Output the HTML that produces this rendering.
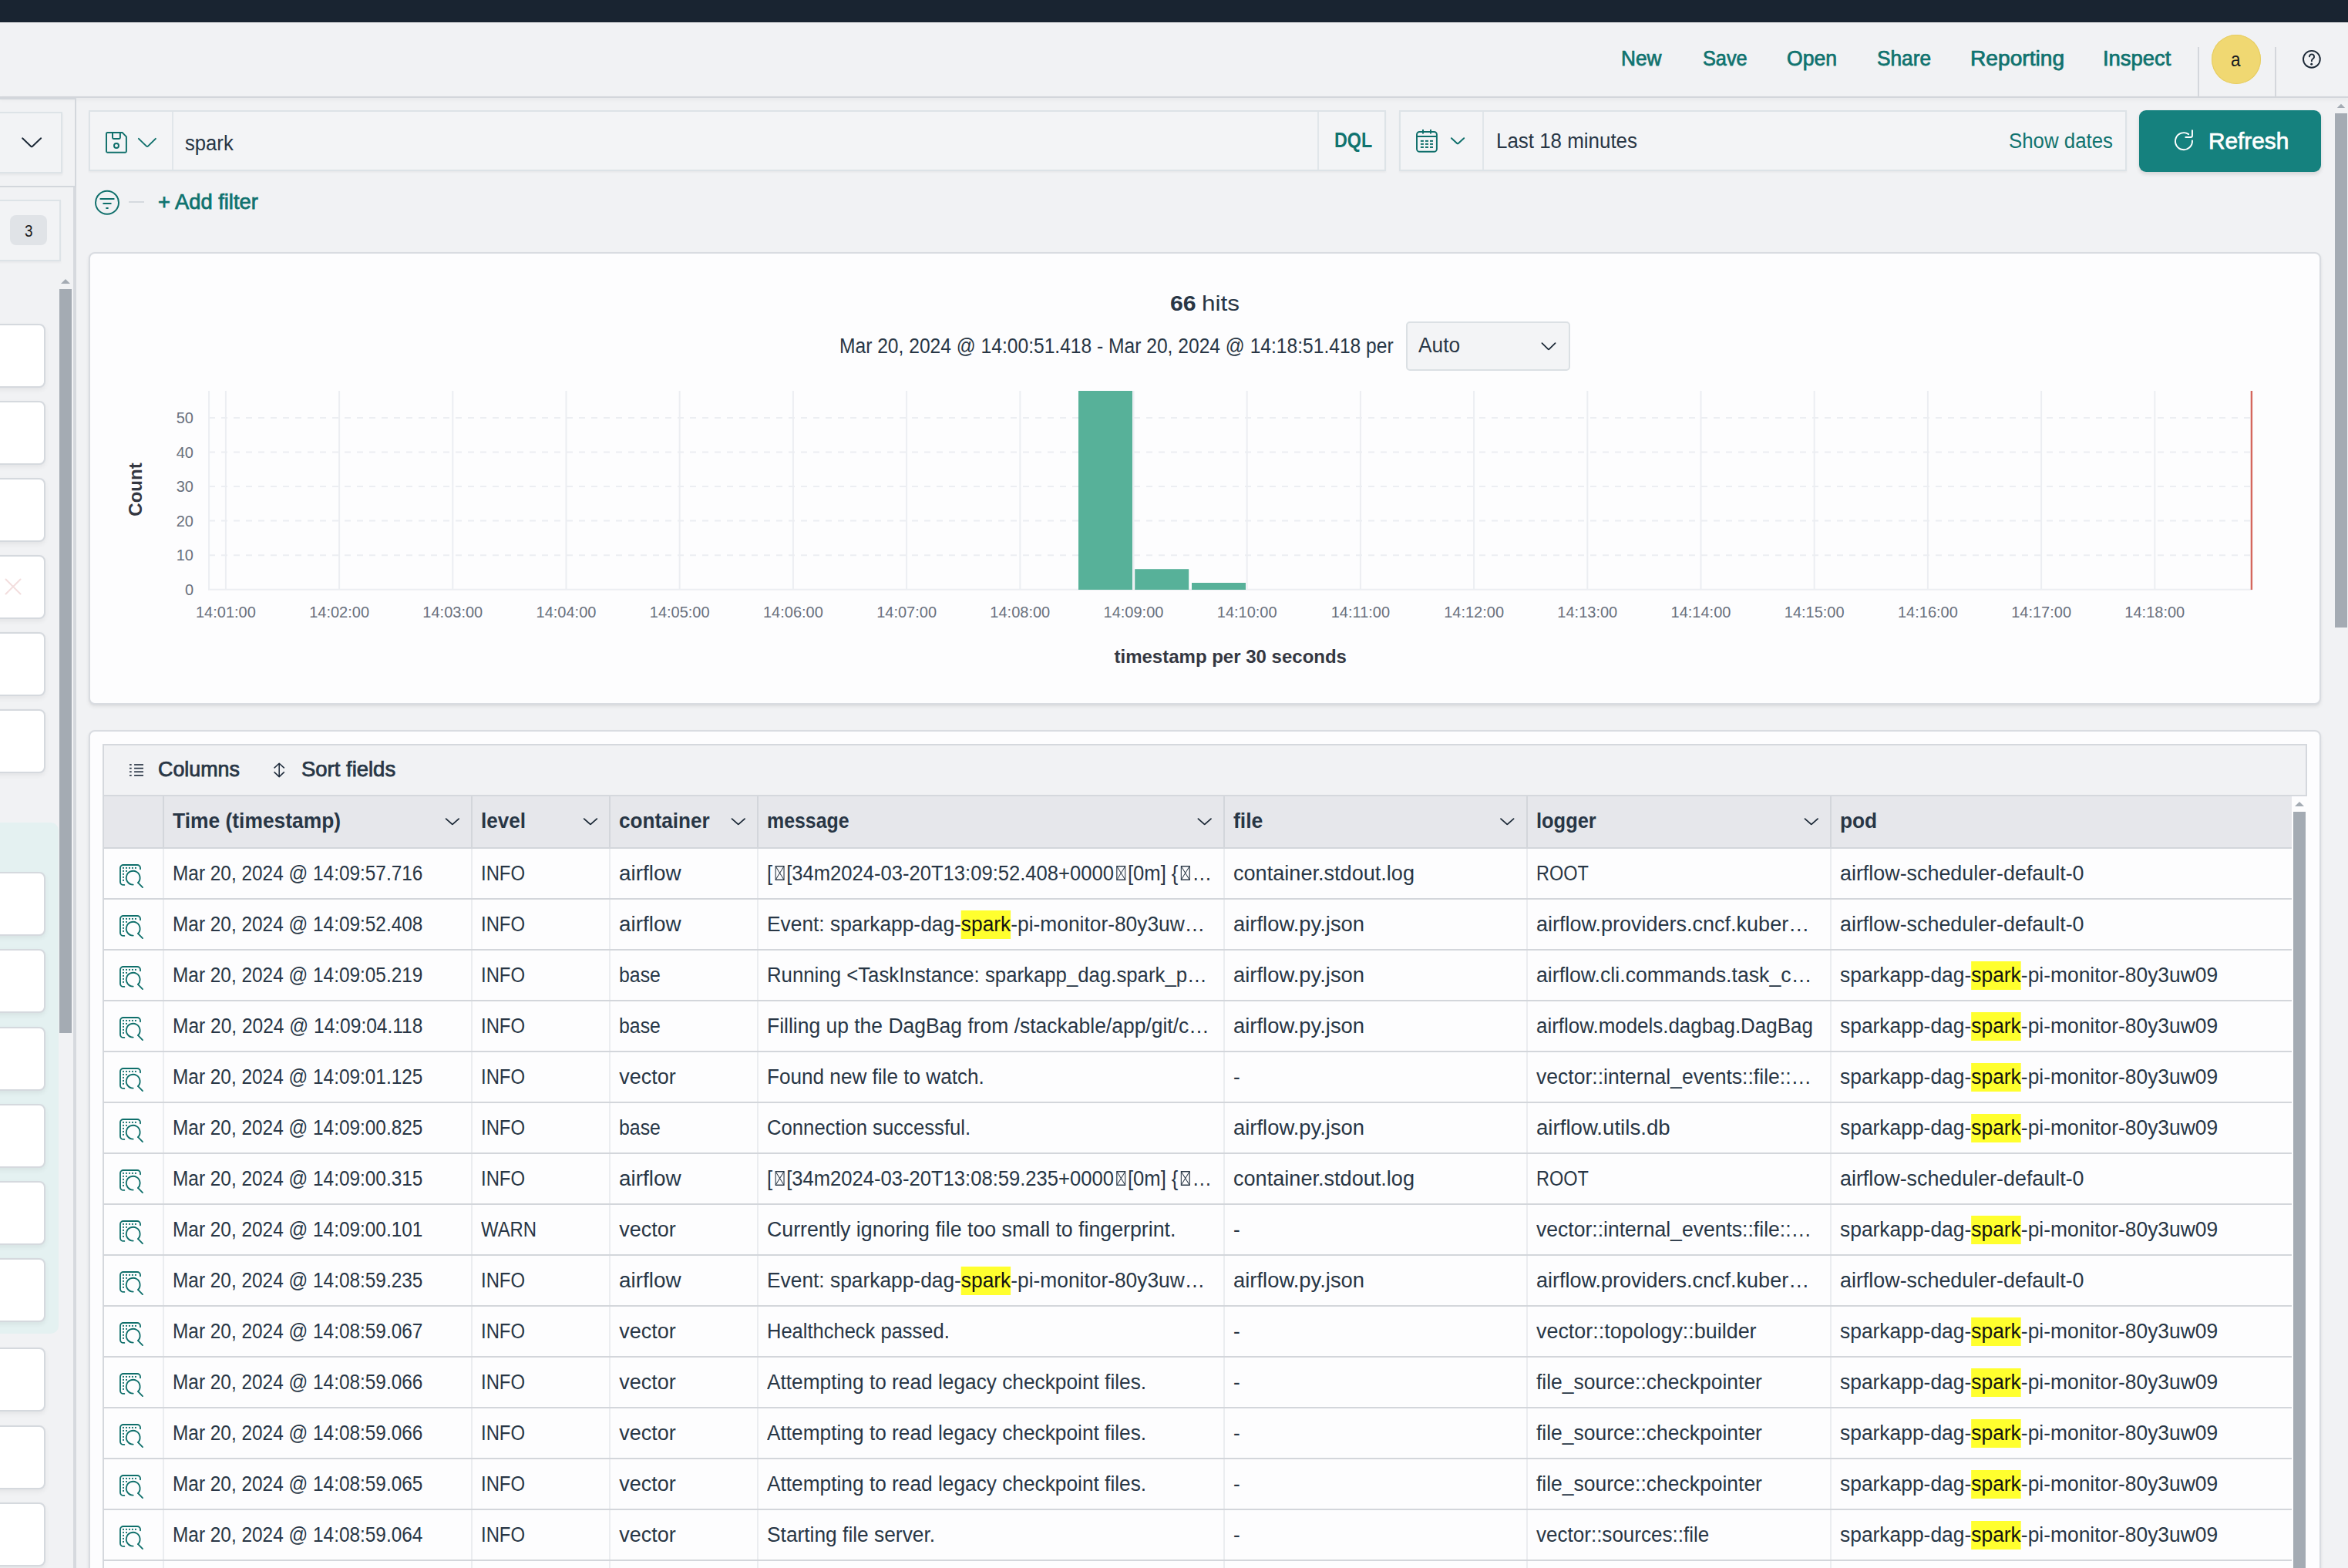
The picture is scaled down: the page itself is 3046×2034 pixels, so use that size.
<!DOCTYPE html>
<html><head><meta charset="utf-8"><title>Discover</title>
<style>div{box-sizing:border-box}html,body{margin:0;padding:0;width:3046px;height:2034px;overflow:hidden;background:#f1f2f4;font-family:'Liberation Sans', sans-serif}</style>
</head><body><div style="position:relative;width:3046px;height:2034px;overflow:hidden">
<div style="position:absolute;left:0px;top:0px;width:3046px;height:29px;background:#192431"></div>
<div style="position:absolute;left:0px;top:29px;width:3046px;height:1px;background:#ffffff"></div>
<div style="position:absolute;left:0px;top:30px;width:3046px;height:95px;background:#f1f2f4"></div>
<div style="position:absolute;left:0px;top:125px;width:3046px;height:2px;background:#d3d6db;box-shadow:0 2px 4px rgba(0,0,0,.09)"></div>
<div style="position:absolute;left:2851px;top:61px;width:2px;height:64px;background:#d4d7dc"></div>
<div style="position:absolute;left:2951px;top:61px;width:2px;height:64px;background:#d4d7dc"></div>
<div style="position:absolute;left:2869px;top:45px;width:64px;height:64px;background:#f0d872;border-radius:50%;box-shadow:inset 0 0 0 1px #e6cd63"></div>
<svg style="position:absolute;left:2975px;top:50px" width="50" height="50" viewBox="0 0 50 50"><circle cx="23.9" cy="26.8" r="10.9" fill="none" stroke="#1b2836" stroke-width="1.9"/><path d="M20.9 23.4 A3.1 3.1 0 1 1 26.3 25.6 C25.2 26.5 23.9 27 23.9 28.4 V29.2" fill="none" stroke="#1b2836" stroke-width="1.9" stroke-linecap="round"/><circle cx="23.7" cy="33.2" r="1.45" fill="#1b2836"/></svg>
<div style="position:absolute;left:3029px;top:147px;width:16px;height:667px;background:#a4abb3"></div>
<div style="position:absolute;left:-10px;top:127px;width:109px;height:116px;border:2px solid #d3d7dc;border-left:none"></div>
<div style="position:absolute;left:95px;top:243px;width:4px;height:1791px;background:#d6d9de"></div>
<div style="position:absolute;left:-10px;top:145px;width:91px;height:80px;border:2px solid #dde3e7;background:#f2f3f5;box-shadow:0 2px 3px rgba(0,0,0,.05)"></div>
<div style="position:absolute;left:-10px;top:259px;width:89px;height:80px;border:2px solid #dde3e7;background:#f2f3f5;box-shadow:0 2px 3px rgba(0,0,0,.04)"></div>
<div style="position:absolute;left:13px;top:279px;width:48px;height:39px;background:#e0e3e7;border-radius:8px"></div>
<div style="position:absolute;left:77px;top:375px;width:16px;height:965px;background:#a4abb3"></div>
<svg style="position:absolute;left:79px;top:361px" width="12" height="8"><path d="M0 7 L6 1 L12 7 Z" fill="#a4abb3"/></svg>
<div style="position:absolute;left:-10px;top:1067px;width:86px;height:663px;background:#e4f1f1;border-radius:0 10px 10px 0"></div>
<div style="position:absolute;left:-10px;top:420px;width:69px;height:83px;background:#fff;border:2px solid #d5d9de;border-radius:0 8px 8px 0;box-shadow:0 3px 6px rgba(0,0,0,.06);box-sizing:border-box"></div>
<div style="position:absolute;left:-10px;top:520px;width:69px;height:83px;background:#fff;border:2px solid #d5d9de;border-radius:0 8px 8px 0;box-shadow:0 3px 6px rgba(0,0,0,.06);box-sizing:border-box"></div>
<div style="position:absolute;left:-10px;top:620px;width:69px;height:83px;background:#fff;border:2px solid #d5d9de;border-radius:0 8px 8px 0;box-shadow:0 3px 6px rgba(0,0,0,.06);box-sizing:border-box"></div>
<div style="position:absolute;left:-10px;top:720px;width:69px;height:83px;background:#fff;border:2px solid #d5d9de;border-radius:0 8px 8px 0;box-shadow:0 3px 6px rgba(0,0,0,.06);box-sizing:border-box"></div>
<div style="position:absolute;left:-10px;top:820px;width:69px;height:83px;background:#fff;border:2px solid #d5d9de;border-radius:0 8px 8px 0;box-shadow:0 3px 6px rgba(0,0,0,.06);box-sizing:border-box"></div>
<div style="position:absolute;left:-10px;top:920px;width:69px;height:83px;background:#fff;border:2px solid #d5d9de;border-radius:0 8px 8px 0;box-shadow:0 3px 6px rgba(0,0,0,.06);box-sizing:border-box"></div>
<div style="position:absolute;left:-10px;top:1131px;width:69px;height:83px;background:#fff;border:2px solid #d5d9de;border-radius:0 8px 8px 0;box-shadow:0 3px 6px rgba(0,0,0,.06);box-sizing:border-box"></div>
<div style="position:absolute;left:-10px;top:1231px;width:69px;height:83px;background:#fff;border:2px solid #d5d9de;border-radius:0 8px 8px 0;box-shadow:0 3px 6px rgba(0,0,0,.06);box-sizing:border-box"></div>
<div style="position:absolute;left:-10px;top:1332px;width:69px;height:83px;background:#fff;border:2px solid #d5d9de;border-radius:0 8px 8px 0;box-shadow:0 3px 6px rgba(0,0,0,.06);box-sizing:border-box"></div>
<div style="position:absolute;left:-10px;top:1432px;width:69px;height:83px;background:#fff;border:2px solid #d5d9de;border-radius:0 8px 8px 0;box-shadow:0 3px 6px rgba(0,0,0,.06);box-sizing:border-box"></div>
<div style="position:absolute;left:-10px;top:1532px;width:69px;height:83px;background:#fff;border:2px solid #d5d9de;border-radius:0 8px 8px 0;box-shadow:0 3px 6px rgba(0,0,0,.06);box-sizing:border-box"></div>
<div style="position:absolute;left:-10px;top:1632px;width:69px;height:83px;background:#fff;border:2px solid #d5d9de;border-radius:0 8px 8px 0;box-shadow:0 3px 6px rgba(0,0,0,.06);box-sizing:border-box"></div>
<div style="position:absolute;left:-10px;top:1748px;width:69px;height:83px;background:#fff;border:2px solid #d5d9de;border-radius:0 8px 8px 0;box-shadow:0 3px 6px rgba(0,0,0,.06);box-sizing:border-box"></div>
<div style="position:absolute;left:-10px;top:1849px;width:69px;height:83px;background:#fff;border:2px solid #d5d9de;border-radius:0 8px 8px 0;box-shadow:0 3px 6px rgba(0,0,0,.06);box-sizing:border-box"></div>
<div style="position:absolute;left:-10px;top:1949px;width:69px;height:83px;background:#fff;border:2px solid #d5d9de;border-radius:0 8px 8px 0;box-shadow:0 3px 6px rgba(0,0,0,.06);box-sizing:border-box"></div>
<svg style="position:absolute;left:6px;top:750px" width="22" height="22"><path d="M1.5 1.5 L20.5 20.5 M20.5 1.5 L1.5 20.5" stroke="#f3dede" stroke-width="2" stroke-linecap="round"/></svg>
<div style="position:absolute;left:115px;top:143px;width:1683px;height:79px;background:#f3f4f6;border:2px solid #dde3e7;box-sizing:border-box;box-shadow:0 2px 2px rgba(0,0,0,.04)"></div>
<div style="position:absolute;left:223px;top:145px;width:2px;height:75px;background:#e1e6ea"></div>
<div style="position:absolute;left:1709px;top:145px;width:2px;height:75px;background:#e1e6ea"></div>
<div style="position:absolute;left:1815px;top:143px;width:944px;height:79px;background:#f3f4f6;border:2px solid #dde3e7;box-sizing:border-box;box-shadow:0 2px 2px rgba(0,0,0,.04)"></div>
<div style="position:absolute;left:1923px;top:145px;width:2px;height:75px;background:#e1e6ea"></div>
<div style="position:absolute;left:2775px;top:143px;width:236px;height:80px;background:#15817e;border-radius:9px;box-shadow:0 3px 5px rgba(0,0,0,.12)"></div>
<div style="position:absolute;left:167px;top:261px;width:20px;height:2px;background:#d5d9de"></div>
<div style="position:absolute;left:115px;top:327px;width:2896px;height:587px;background:#fdfdfe;border:2px solid #d9dce1;border-radius:8px;box-sizing:border-box;box-shadow:0 3px 5px rgba(0,0,0,.07),0 1px 2px rgba(0,0,0,.04)"></div>
<div style="position:absolute;left:1824px;top:417px;width:213px;height:64px;background:#f3f4f6;border:2px solid #dbe0e4;border-radius:5px;box-sizing:border-box"></div>
<svg style="position:absolute;left:0;top:0" width="3046" height="2034"><line x1="271" y1="720.2" x2="2921" y2="720.2" stroke="#eceef2" stroke-width="2" stroke-dasharray="8 8"/><line x1="271" y1="675.6" x2="2921" y2="675.6" stroke="#eceef2" stroke-width="2" stroke-dasharray="8 8"/><line x1="271" y1="631.1" x2="2921" y2="631.1" stroke="#eceef2" stroke-width="2" stroke-dasharray="8 8"/><line x1="271" y1="586.5" x2="2921" y2="586.5" stroke="#eceef2" stroke-width="2" stroke-dasharray="8 8"/><line x1="271" y1="541.9" x2="2921" y2="541.9" stroke="#eceef2" stroke-width="2" stroke-dasharray="8 8"/><line x1="292.9" y1="507" x2="292.9" y2="765" stroke="#eceef2" stroke-width="2"/><line x1="440.1" y1="507" x2="440.1" y2="765" stroke="#eceef2" stroke-width="2"/><line x1="587.3" y1="507" x2="587.3" y2="765" stroke="#eceef2" stroke-width="2"/><line x1="734.5" y1="507" x2="734.5" y2="765" stroke="#eceef2" stroke-width="2"/><line x1="881.7" y1="507" x2="881.7" y2="765" stroke="#eceef2" stroke-width="2"/><line x1="1028.9" y1="507" x2="1028.9" y2="765" stroke="#eceef2" stroke-width="2"/><line x1="1176.1" y1="507" x2="1176.1" y2="765" stroke="#eceef2" stroke-width="2"/><line x1="1323.3" y1="507" x2="1323.3" y2="765" stroke="#eceef2" stroke-width="2"/><line x1="1470.5" y1="507" x2="1470.5" y2="765" stroke="#eceef2" stroke-width="2"/><line x1="1617.7" y1="507" x2="1617.7" y2="765" stroke="#eceef2" stroke-width="2"/><line x1="1764.9" y1="507" x2="1764.9" y2="765" stroke="#eceef2" stroke-width="2"/><line x1="1912.1" y1="507" x2="1912.1" y2="765" stroke="#eceef2" stroke-width="2"/><line x1="2059.3" y1="507" x2="2059.3" y2="765" stroke="#eceef2" stroke-width="2"/><line x1="2206.5" y1="507" x2="2206.5" y2="765" stroke="#eceef2" stroke-width="2"/><line x1="2353.7" y1="507" x2="2353.7" y2="765" stroke="#eceef2" stroke-width="2"/><line x1="2500.9" y1="507" x2="2500.9" y2="765" stroke="#eceef2" stroke-width="2"/><line x1="2648.1" y1="507" x2="2648.1" y2="765" stroke="#eceef2" stroke-width="2"/><line x1="2795.3" y1="507" x2="2795.3" y2="765" stroke="#eceef2" stroke-width="2"/><line x1="271.1" y1="507" x2="271.1" y2="765" stroke="#eceef2" stroke-width="2"/><line x1="270" y1="764.8" x2="2922" y2="764.8" stroke="#eceef2" stroke-width="2"/><rect x="1399" y="507" width="70" height="258" fill="#57b199"/><rect x="1472.2" y="738.2" width="70" height="26.8" fill="#57b199"/><rect x="1546" y="756" width="70" height="9" fill="#57b199"/><rect x="2919.7" y="507" width="2.4" height="258" fill="#d4675d"/></svg>
<div style="position:absolute;left:176px;top:635px;width:0;height:0"><div style="position:absolute;left:-50px;top:-14px;width:100px;height:28px;transform:rotate(-90deg);text-align:center;font:700 24px/28px 'Liberation Sans', sans-serif;color:#343741">Count</div></div>
<div style="position:absolute;left:115px;top:947px;width:2896px;height:1107px;background:#fdfdfe;border:2px solid #d9dce1;border-radius:8px;box-sizing:border-box;box-shadow:0 3px 5px rgba(0,0,0,.07),0 1px 2px rgba(0,0,0,.04)"></div>
<div style="position:absolute;left:133px;top:965px;width:2860px;height:68px;background:#f1f2f4;border:2px solid #d5d8dd;border-bottom:none;box-sizing:border-box"></div>
<div style="position:absolute;left:133px;top:1031px;width:2860px;height:2px;background:#d5d8dd"></div>
<div style="position:absolute;left:133px;top:1033px;width:2840px;height:67px;background:#e6e7eb"></div>
<div style="position:absolute;left:133px;top:1099px;width:2840px;height:2px;background:#d3d6db"></div>
<div style="position:absolute;left:133px;top:1033px;width:2px;height:1001px;background:#d5d8dd"></div>
<div style="position:absolute;left:211px;top:1033px;width:2px;height:67px;background:#d3d6db"></div>
<div style="position:absolute;left:211px;top:1101px;width:2px;height:933px;background:#ebedf0"></div>
<div style="position:absolute;left:611px;top:1033px;width:2px;height:67px;background:#d3d6db"></div>
<div style="position:absolute;left:611px;top:1101px;width:2px;height:933px;background:#ebedf0"></div>
<div style="position:absolute;left:790px;top:1033px;width:2px;height:67px;background:#d3d6db"></div>
<div style="position:absolute;left:790px;top:1101px;width:2px;height:933px;background:#ebedf0"></div>
<div style="position:absolute;left:982px;top:1033px;width:2px;height:67px;background:#d3d6db"></div>
<div style="position:absolute;left:982px;top:1101px;width:2px;height:933px;background:#ebedf0"></div>
<div style="position:absolute;left:1587px;top:1033px;width:2px;height:67px;background:#d3d6db"></div>
<div style="position:absolute;left:1587px;top:1101px;width:2px;height:933px;background:#ebedf0"></div>
<div style="position:absolute;left:1980px;top:1033px;width:2px;height:67px;background:#d3d6db"></div>
<div style="position:absolute;left:1980px;top:1101px;width:2px;height:933px;background:#ebedf0"></div>
<div style="position:absolute;left:2374px;top:1033px;width:2px;height:67px;background:#d3d6db"></div>
<div style="position:absolute;left:2374px;top:1101px;width:2px;height:933px;background:#ebedf0"></div>
<div style="position:absolute;left:2975px;top:1053px;width:16px;height:981px;background:#a4abb3"></div>
<svg style="position:absolute;left:2977px;top:1039px" width="12" height="8"><path d="M0 7 L6 1 L12 7 Z" fill="#a4abb3"/></svg>
<div style="position:absolute;left:133px;top:1165px;width:2840px;height:2px;background:#d3d6db"></div>
<div style="position:absolute;left:133px;top:1231px;width:2840px;height:2px;background:#d3d6db"></div>
<div style="position:absolute;left:133px;top:1297px;width:2840px;height:2px;background:#d3d6db"></div>
<div style="position:absolute;left:133px;top:1363px;width:2840px;height:2px;background:#d3d6db"></div>
<div style="position:absolute;left:133px;top:1429px;width:2840px;height:2px;background:#d3d6db"></div>
<div style="position:absolute;left:133px;top:1495px;width:2840px;height:2px;background:#d3d6db"></div>
<div style="position:absolute;left:133px;top:1561px;width:2840px;height:2px;background:#d3d6db"></div>
<div style="position:absolute;left:133px;top:1627px;width:2840px;height:2px;background:#d3d6db"></div>
<div style="position:absolute;left:133px;top:1693px;width:2840px;height:2px;background:#d3d6db"></div>
<div style="position:absolute;left:133px;top:1759px;width:2840px;height:2px;background:#d3d6db"></div>
<div style="position:absolute;left:133px;top:1825px;width:2840px;height:2px;background:#d3d6db"></div>
<div style="position:absolute;left:133px;top:1891px;width:2840px;height:2px;background:#d3d6db"></div>
<div style="position:absolute;left:133px;top:1957px;width:2840px;height:2px;background:#d3d6db"></div>
<div style="position:absolute;left:133px;top:2023px;width:2840px;height:2px;background:#d3d6db"></div>
<div style="position:absolute;left:133px;top:2089px;width:2840px;height:2px;background:#d3d6db"></div>
<svg style="position:absolute;left:0;top:0" width="3046" height="2034"><path d="M3031.8 140 L3037 134.8 L3042.2 140 Z" fill="#a4abb3"/>
<path d="M29.1 179.3 L40.3 190 Q41.1 190.7 41.9 190 L53.2 179.3" fill="none" stroke="#1b2836" stroke-width="1.95" stroke-linecap="round" stroke-linejoin="round"/>
<path d="M139.5 171.9 H158.6 L163.9 177.4 V196.3 Q163.9 197.8 162.4 197.8 H139.5 Q138 197.8 138 196.3 V173.4 Q138 171.9 139.5 171.9 Z" fill="none" stroke="#0f6f6b" stroke-width="1.95" stroke-linejoin="round"/>
<path d="M146 172 V178.6 Q146 179.9 147.3 179.9 H154.6 Q155.9 179.9 155.9 178.6 V172" fill="none" stroke="#0f6f6b" stroke-width="1.95"/>
<circle cx="151" cy="189" r="3" fill="none" stroke="#0f6f6b" stroke-width="1.95"/>
<path d="M179.9 179.9 L190 189.6 Q191 190.5 192 189.6 L201.9 179.9" fill="none" stroke="#0f6f6b" stroke-width="1.95" stroke-linecap="round" stroke-linejoin="round"/>
<rect x="1838" y="170.9" width="25.9" height="25.9" rx="3.6" fill="none" stroke="#0f6f6b" stroke-width="1.95"/>
<path d="M1838 176.9 H1863.9 M1846 168 V173.6 M1856 168 V173.6" fill="none" stroke="#0f6f6b" stroke-width="1.95"/>
<rect x="1842.9" y="181.9" width="4" height="1.95" fill="#0f6f6b"/>
<rect x="1842.9" y="185.9" width="4" height="1.95" fill="#0f6f6b"/>
<rect x="1842.9" y="190.0" width="4" height="1.95" fill="#0f6f6b"/>
<rect x="1849.0" y="181.9" width="4" height="1.95" fill="#0f6f6b"/>
<rect x="1849.0" y="185.9" width="4" height="1.95" fill="#0f6f6b"/>
<rect x="1849.0" y="190.0" width="4" height="1.95" fill="#0f6f6b"/>
<rect x="1855.0" y="181.9" width="4" height="1.95" fill="#0f6f6b"/>
<rect x="1855.0" y="185.9" width="4" height="1.95" fill="#0f6f6b"/>
<rect x="1855.0" y="190.0" width="4" height="1.95" fill="#0f6f6b"/>
<path d="M1882.9 179.2 L1890.2 186 Q1891 186.7 1891.8 186 L1899.2 179.2" fill="none" stroke="#0f6f6b" stroke-width="1.95" stroke-linecap="round" stroke-linejoin="round"/>
<g transform="translate(2810 155)" fill="none" stroke="#fff" stroke-width="1.95" stroke-linecap="round"><path d="M33.96 27.4 A11 11 0 1 1 29.2 19.1"/><path d="M33.96 14.1 V21 Q33.96 22.96 32 22.96 H25.3"/></g>
<circle cx="139" cy="262.8" r="15" fill="none" stroke="#0f6f6b" stroke-width="1.95"/>
<path d="M130.3 257.9 H147.7 M134.2 263.9 H143.8 M138.1 270 H139.9" fill="none" stroke="#0f6f6b" stroke-width="1.95" stroke-linecap="round"/>
<path d="M2000.4 445.2 L2008.3 452.9 Q2009 453.6 2009.7 452.9 L2017.6 445.2" fill="none" stroke="#1b2836" stroke-width="1.75" stroke-linecap="round" stroke-linejoin="round"/>
<rect x="168" y="991.2" width="2.7" height="1.6" fill="#1d2a3a"/><rect x="174.1" y="991.2" width="11.9" height="1.6" fill="#1d2a3a"/>
<rect x="168" y="995.8" width="2.7" height="1.6" fill="#1d2a3a"/><rect x="174.1" y="995.8" width="11.9" height="1.6" fill="#1d2a3a"/>
<rect x="168" y="1000.4" width="2.7" height="1.6" fill="#1d2a3a"/><rect x="174.1" y="1000.4" width="11.9" height="1.6" fill="#1d2a3a"/>
<rect x="168" y="1005.0" width="2.7" height="1.6" fill="#1d2a3a"/><rect x="174.1" y="1005.0" width="11.9" height="1.6" fill="#1d2a3a"/>
<path d="M355.6 996.4 L362.2 990.2 L368.8 996.4 M355.6 1001.4 L362.2 1007.6 L368.8 1001.4 M362.2 990.4 V1007.4" fill="none" stroke="#1d2a3a" stroke-width="1.5" stroke-linejoin="round"/>
<path d="M578.6 1062.2 L586.2 1068.9 Q586.9 1069.6 587.6 1068.9 L595.2 1062.2" fill="none" stroke="#1b2836" stroke-width="1.75" stroke-linecap="round" stroke-linejoin="round"/>
<path d="M757.7 1062.2 L765.3 1068.9 Q766.0 1069.6 766.7 1068.9 L774.3 1062.2" fill="none" stroke="#1b2836" stroke-width="1.75" stroke-linecap="round" stroke-linejoin="round"/>
<path d="M949.5 1062.2 L957.1 1068.9 Q957.8 1069.6 958.5 1068.9 L966.1 1062.2" fill="none" stroke="#1b2836" stroke-width="1.75" stroke-linecap="round" stroke-linejoin="round"/>
<path d="M1554.4 1062.2 L1562.0 1068.9 Q1562.7 1069.6 1563.4 1068.9 L1571.0 1062.2" fill="none" stroke="#1b2836" stroke-width="1.75" stroke-linecap="round" stroke-linejoin="round"/>
<path d="M1947.0 1062.2 L1954.6 1068.9 Q1955.3 1069.6 1956.0 1068.9 L1963.6 1062.2" fill="none" stroke="#1b2836" stroke-width="1.75" stroke-linecap="round" stroke-linejoin="round"/>
<path d="M2341.5 1062.2 L2349.1 1068.9 Q2349.8 1069.6 2350.5 1068.9 L2358.1 1062.2" fill="none" stroke="#1b2836" stroke-width="1.75" stroke-linecap="round" stroke-linejoin="round"/>
<g transform="translate(145 1110)"><g fill="none" stroke="#0f6f6b" stroke-width="1.85" stroke-linecap="round"><path d="M16.3 37.9 H15 A4 4 0 0 1 11 33.9 V16 A4 4 0 0 1 15 12 H33 A4 4 0 0 1 37 16 V17.2"/><path d="M34.0 35.0 A8.9 8.9 0 1 0 27.7 37.6"/><path d="M34.4 35.4 L40 41.1"/></g><g fill="#0f6f6b"><rect x="14.05" y="14.95" width="1.9" height="1.9"/><rect x="18.05" y="14.95" width="1.9" height="1.9"/><rect x="22.05" y="14.95" width="1.9" height="1.9"/><rect x="25.95" y="14.95" width="1.9" height="1.9"/><rect x="29.95" y="14.95" width="1.9" height="1.9"/><rect x="14.05" y="18.95" width="1.9" height="1.9"/><rect x="18.05" y="18.95" width="1.9" height="1.9"/><rect x="14.05" y="22.95" width="1.9" height="1.9"/><rect x="14.05" y="26.95" width="1.9" height="1.9"/><rect x="14.05" y="30.95" width="1.9" height="1.9"/></g></g>
<g transform="translate(145 1176)"><g fill="none" stroke="#0f6f6b" stroke-width="1.85" stroke-linecap="round"><path d="M16.3 37.9 H15 A4 4 0 0 1 11 33.9 V16 A4 4 0 0 1 15 12 H33 A4 4 0 0 1 37 16 V17.2"/><path d="M34.0 35.0 A8.9 8.9 0 1 0 27.7 37.6"/><path d="M34.4 35.4 L40 41.1"/></g><g fill="#0f6f6b"><rect x="14.05" y="14.95" width="1.9" height="1.9"/><rect x="18.05" y="14.95" width="1.9" height="1.9"/><rect x="22.05" y="14.95" width="1.9" height="1.9"/><rect x="25.95" y="14.95" width="1.9" height="1.9"/><rect x="29.95" y="14.95" width="1.9" height="1.9"/><rect x="14.05" y="18.95" width="1.9" height="1.9"/><rect x="18.05" y="18.95" width="1.9" height="1.9"/><rect x="14.05" y="22.95" width="1.9" height="1.9"/><rect x="14.05" y="26.95" width="1.9" height="1.9"/><rect x="14.05" y="30.95" width="1.9" height="1.9"/></g></g>
<g transform="translate(145 1242)"><g fill="none" stroke="#0f6f6b" stroke-width="1.85" stroke-linecap="round"><path d="M16.3 37.9 H15 A4 4 0 0 1 11 33.9 V16 A4 4 0 0 1 15 12 H33 A4 4 0 0 1 37 16 V17.2"/><path d="M34.0 35.0 A8.9 8.9 0 1 0 27.7 37.6"/><path d="M34.4 35.4 L40 41.1"/></g><g fill="#0f6f6b"><rect x="14.05" y="14.95" width="1.9" height="1.9"/><rect x="18.05" y="14.95" width="1.9" height="1.9"/><rect x="22.05" y="14.95" width="1.9" height="1.9"/><rect x="25.95" y="14.95" width="1.9" height="1.9"/><rect x="29.95" y="14.95" width="1.9" height="1.9"/><rect x="14.05" y="18.95" width="1.9" height="1.9"/><rect x="18.05" y="18.95" width="1.9" height="1.9"/><rect x="14.05" y="22.95" width="1.9" height="1.9"/><rect x="14.05" y="26.95" width="1.9" height="1.9"/><rect x="14.05" y="30.95" width="1.9" height="1.9"/></g></g>
<g transform="translate(145 1308)"><g fill="none" stroke="#0f6f6b" stroke-width="1.85" stroke-linecap="round"><path d="M16.3 37.9 H15 A4 4 0 0 1 11 33.9 V16 A4 4 0 0 1 15 12 H33 A4 4 0 0 1 37 16 V17.2"/><path d="M34.0 35.0 A8.9 8.9 0 1 0 27.7 37.6"/><path d="M34.4 35.4 L40 41.1"/></g><g fill="#0f6f6b"><rect x="14.05" y="14.95" width="1.9" height="1.9"/><rect x="18.05" y="14.95" width="1.9" height="1.9"/><rect x="22.05" y="14.95" width="1.9" height="1.9"/><rect x="25.95" y="14.95" width="1.9" height="1.9"/><rect x="29.95" y="14.95" width="1.9" height="1.9"/><rect x="14.05" y="18.95" width="1.9" height="1.9"/><rect x="18.05" y="18.95" width="1.9" height="1.9"/><rect x="14.05" y="22.95" width="1.9" height="1.9"/><rect x="14.05" y="26.95" width="1.9" height="1.9"/><rect x="14.05" y="30.95" width="1.9" height="1.9"/></g></g>
<g transform="translate(145 1374)"><g fill="none" stroke="#0f6f6b" stroke-width="1.85" stroke-linecap="round"><path d="M16.3 37.9 H15 A4 4 0 0 1 11 33.9 V16 A4 4 0 0 1 15 12 H33 A4 4 0 0 1 37 16 V17.2"/><path d="M34.0 35.0 A8.9 8.9 0 1 0 27.7 37.6"/><path d="M34.4 35.4 L40 41.1"/></g><g fill="#0f6f6b"><rect x="14.05" y="14.95" width="1.9" height="1.9"/><rect x="18.05" y="14.95" width="1.9" height="1.9"/><rect x="22.05" y="14.95" width="1.9" height="1.9"/><rect x="25.95" y="14.95" width="1.9" height="1.9"/><rect x="29.95" y="14.95" width="1.9" height="1.9"/><rect x="14.05" y="18.95" width="1.9" height="1.9"/><rect x="18.05" y="18.95" width="1.9" height="1.9"/><rect x="14.05" y="22.95" width="1.9" height="1.9"/><rect x="14.05" y="26.95" width="1.9" height="1.9"/><rect x="14.05" y="30.95" width="1.9" height="1.9"/></g></g>
<g transform="translate(145 1440)"><g fill="none" stroke="#0f6f6b" stroke-width="1.85" stroke-linecap="round"><path d="M16.3 37.9 H15 A4 4 0 0 1 11 33.9 V16 A4 4 0 0 1 15 12 H33 A4 4 0 0 1 37 16 V17.2"/><path d="M34.0 35.0 A8.9 8.9 0 1 0 27.7 37.6"/><path d="M34.4 35.4 L40 41.1"/></g><g fill="#0f6f6b"><rect x="14.05" y="14.95" width="1.9" height="1.9"/><rect x="18.05" y="14.95" width="1.9" height="1.9"/><rect x="22.05" y="14.95" width="1.9" height="1.9"/><rect x="25.95" y="14.95" width="1.9" height="1.9"/><rect x="29.95" y="14.95" width="1.9" height="1.9"/><rect x="14.05" y="18.95" width="1.9" height="1.9"/><rect x="18.05" y="18.95" width="1.9" height="1.9"/><rect x="14.05" y="22.95" width="1.9" height="1.9"/><rect x="14.05" y="26.95" width="1.9" height="1.9"/><rect x="14.05" y="30.95" width="1.9" height="1.9"/></g></g>
<g transform="translate(145 1506)"><g fill="none" stroke="#0f6f6b" stroke-width="1.85" stroke-linecap="round"><path d="M16.3 37.9 H15 A4 4 0 0 1 11 33.9 V16 A4 4 0 0 1 15 12 H33 A4 4 0 0 1 37 16 V17.2"/><path d="M34.0 35.0 A8.9 8.9 0 1 0 27.7 37.6"/><path d="M34.4 35.4 L40 41.1"/></g><g fill="#0f6f6b"><rect x="14.05" y="14.95" width="1.9" height="1.9"/><rect x="18.05" y="14.95" width="1.9" height="1.9"/><rect x="22.05" y="14.95" width="1.9" height="1.9"/><rect x="25.95" y="14.95" width="1.9" height="1.9"/><rect x="29.95" y="14.95" width="1.9" height="1.9"/><rect x="14.05" y="18.95" width="1.9" height="1.9"/><rect x="18.05" y="18.95" width="1.9" height="1.9"/><rect x="14.05" y="22.95" width="1.9" height="1.9"/><rect x="14.05" y="26.95" width="1.9" height="1.9"/><rect x="14.05" y="30.95" width="1.9" height="1.9"/></g></g>
<g transform="translate(145 1572)"><g fill="none" stroke="#0f6f6b" stroke-width="1.85" stroke-linecap="round"><path d="M16.3 37.9 H15 A4 4 0 0 1 11 33.9 V16 A4 4 0 0 1 15 12 H33 A4 4 0 0 1 37 16 V17.2"/><path d="M34.0 35.0 A8.9 8.9 0 1 0 27.7 37.6"/><path d="M34.4 35.4 L40 41.1"/></g><g fill="#0f6f6b"><rect x="14.05" y="14.95" width="1.9" height="1.9"/><rect x="18.05" y="14.95" width="1.9" height="1.9"/><rect x="22.05" y="14.95" width="1.9" height="1.9"/><rect x="25.95" y="14.95" width="1.9" height="1.9"/><rect x="29.95" y="14.95" width="1.9" height="1.9"/><rect x="14.05" y="18.95" width="1.9" height="1.9"/><rect x="18.05" y="18.95" width="1.9" height="1.9"/><rect x="14.05" y="22.95" width="1.9" height="1.9"/><rect x="14.05" y="26.95" width="1.9" height="1.9"/><rect x="14.05" y="30.95" width="1.9" height="1.9"/></g></g>
<g transform="translate(145 1638)"><g fill="none" stroke="#0f6f6b" stroke-width="1.85" stroke-linecap="round"><path d="M16.3 37.9 H15 A4 4 0 0 1 11 33.9 V16 A4 4 0 0 1 15 12 H33 A4 4 0 0 1 37 16 V17.2"/><path d="M34.0 35.0 A8.9 8.9 0 1 0 27.7 37.6"/><path d="M34.4 35.4 L40 41.1"/></g><g fill="#0f6f6b"><rect x="14.05" y="14.95" width="1.9" height="1.9"/><rect x="18.05" y="14.95" width="1.9" height="1.9"/><rect x="22.05" y="14.95" width="1.9" height="1.9"/><rect x="25.95" y="14.95" width="1.9" height="1.9"/><rect x="29.95" y="14.95" width="1.9" height="1.9"/><rect x="14.05" y="18.95" width="1.9" height="1.9"/><rect x="18.05" y="18.95" width="1.9" height="1.9"/><rect x="14.05" y="22.95" width="1.9" height="1.9"/><rect x="14.05" y="26.95" width="1.9" height="1.9"/><rect x="14.05" y="30.95" width="1.9" height="1.9"/></g></g>
<g transform="translate(145 1704)"><g fill="none" stroke="#0f6f6b" stroke-width="1.85" stroke-linecap="round"><path d="M16.3 37.9 H15 A4 4 0 0 1 11 33.9 V16 A4 4 0 0 1 15 12 H33 A4 4 0 0 1 37 16 V17.2"/><path d="M34.0 35.0 A8.9 8.9 0 1 0 27.7 37.6"/><path d="M34.4 35.4 L40 41.1"/></g><g fill="#0f6f6b"><rect x="14.05" y="14.95" width="1.9" height="1.9"/><rect x="18.05" y="14.95" width="1.9" height="1.9"/><rect x="22.05" y="14.95" width="1.9" height="1.9"/><rect x="25.95" y="14.95" width="1.9" height="1.9"/><rect x="29.95" y="14.95" width="1.9" height="1.9"/><rect x="14.05" y="18.95" width="1.9" height="1.9"/><rect x="18.05" y="18.95" width="1.9" height="1.9"/><rect x="14.05" y="22.95" width="1.9" height="1.9"/><rect x="14.05" y="26.95" width="1.9" height="1.9"/><rect x="14.05" y="30.95" width="1.9" height="1.9"/></g></g>
<g transform="translate(145 1770)"><g fill="none" stroke="#0f6f6b" stroke-width="1.85" stroke-linecap="round"><path d="M16.3 37.9 H15 A4 4 0 0 1 11 33.9 V16 A4 4 0 0 1 15 12 H33 A4 4 0 0 1 37 16 V17.2"/><path d="M34.0 35.0 A8.9 8.9 0 1 0 27.7 37.6"/><path d="M34.4 35.4 L40 41.1"/></g><g fill="#0f6f6b"><rect x="14.05" y="14.95" width="1.9" height="1.9"/><rect x="18.05" y="14.95" width="1.9" height="1.9"/><rect x="22.05" y="14.95" width="1.9" height="1.9"/><rect x="25.95" y="14.95" width="1.9" height="1.9"/><rect x="29.95" y="14.95" width="1.9" height="1.9"/><rect x="14.05" y="18.95" width="1.9" height="1.9"/><rect x="18.05" y="18.95" width="1.9" height="1.9"/><rect x="14.05" y="22.95" width="1.9" height="1.9"/><rect x="14.05" y="26.95" width="1.9" height="1.9"/><rect x="14.05" y="30.95" width="1.9" height="1.9"/></g></g>
<g transform="translate(145 1836)"><g fill="none" stroke="#0f6f6b" stroke-width="1.85" stroke-linecap="round"><path d="M16.3 37.9 H15 A4 4 0 0 1 11 33.9 V16 A4 4 0 0 1 15 12 H33 A4 4 0 0 1 37 16 V17.2"/><path d="M34.0 35.0 A8.9 8.9 0 1 0 27.7 37.6"/><path d="M34.4 35.4 L40 41.1"/></g><g fill="#0f6f6b"><rect x="14.05" y="14.95" width="1.9" height="1.9"/><rect x="18.05" y="14.95" width="1.9" height="1.9"/><rect x="22.05" y="14.95" width="1.9" height="1.9"/><rect x="25.95" y="14.95" width="1.9" height="1.9"/><rect x="29.95" y="14.95" width="1.9" height="1.9"/><rect x="14.05" y="18.95" width="1.9" height="1.9"/><rect x="18.05" y="18.95" width="1.9" height="1.9"/><rect x="14.05" y="22.95" width="1.9" height="1.9"/><rect x="14.05" y="26.95" width="1.9" height="1.9"/><rect x="14.05" y="30.95" width="1.9" height="1.9"/></g></g>
<g transform="translate(145 1902)"><g fill="none" stroke="#0f6f6b" stroke-width="1.85" stroke-linecap="round"><path d="M16.3 37.9 H15 A4 4 0 0 1 11 33.9 V16 A4 4 0 0 1 15 12 H33 A4 4 0 0 1 37 16 V17.2"/><path d="M34.0 35.0 A8.9 8.9 0 1 0 27.7 37.6"/><path d="M34.4 35.4 L40 41.1"/></g><g fill="#0f6f6b"><rect x="14.05" y="14.95" width="1.9" height="1.9"/><rect x="18.05" y="14.95" width="1.9" height="1.9"/><rect x="22.05" y="14.95" width="1.9" height="1.9"/><rect x="25.95" y="14.95" width="1.9" height="1.9"/><rect x="29.95" y="14.95" width="1.9" height="1.9"/><rect x="14.05" y="18.95" width="1.9" height="1.9"/><rect x="18.05" y="18.95" width="1.9" height="1.9"/><rect x="14.05" y="22.95" width="1.9" height="1.9"/><rect x="14.05" y="26.95" width="1.9" height="1.9"/><rect x="14.05" y="30.95" width="1.9" height="1.9"/></g></g>
<g transform="translate(145 1968)"><g fill="none" stroke="#0f6f6b" stroke-width="1.85" stroke-linecap="round"><path d="M16.3 37.9 H15 A4 4 0 0 1 11 33.9 V16 A4 4 0 0 1 15 12 H33 A4 4 0 0 1 37 16 V17.2"/><path d="M34.0 35.0 A8.9 8.9 0 1 0 27.7 37.6"/><path d="M34.4 35.4 L40 41.1"/></g><g fill="#0f6f6b"><rect x="14.05" y="14.95" width="1.9" height="1.9"/><rect x="18.05" y="14.95" width="1.9" height="1.9"/><rect x="22.05" y="14.95" width="1.9" height="1.9"/><rect x="25.95" y="14.95" width="1.9" height="1.9"/><rect x="29.95" y="14.95" width="1.9" height="1.9"/><rect x="14.05" y="18.95" width="1.9" height="1.9"/><rect x="18.05" y="18.95" width="1.9" height="1.9"/><rect x="14.05" y="22.95" width="1.9" height="1.9"/><rect x="14.05" y="26.95" width="1.9" height="1.9"/><rect x="14.05" y="30.95" width="1.9" height="1.9"/></g></g>
<g transform="translate(145 2034)"><g fill="none" stroke="#0f6f6b" stroke-width="1.85" stroke-linecap="round"><path d="M16.3 37.9 H15 A4 4 0 0 1 11 33.9 V16 A4 4 0 0 1 15 12 H33 A4 4 0 0 1 37 16 V17.2"/><path d="M34.0 35.0 A8.9 8.9 0 1 0 27.7 37.6"/><path d="M34.4 35.4 L40 41.1"/></g><g fill="#0f6f6b"><rect x="14.05" y="14.95" width="1.9" height="1.9"/><rect x="18.05" y="14.95" width="1.9" height="1.9"/><rect x="22.05" y="14.95" width="1.9" height="1.9"/><rect x="25.95" y="14.95" width="1.9" height="1.9"/><rect x="29.95" y="14.95" width="1.9" height="1.9"/><rect x="14.05" y="18.95" width="1.9" height="1.9"/><rect x="18.05" y="18.95" width="1.9" height="1.9"/><rect x="14.05" y="22.95" width="1.9" height="1.9"/><rect x="14.05" y="26.95" width="1.9" height="1.9"/><rect x="14.05" y="30.95" width="1.9" height="1.9"/></g></g></svg>
<div style="position:absolute;top:62.9px;height:27px;font:400 27px/27px 'Liberation Sans', sans-serif;color:#10736f;white-space:nowrap;-webkit-text-stroke:0.75px #10736f;left:2103.3px;transform:scaleX(0.9693);transform-origin:0 0;">New</div>
<div style="position:absolute;top:62.9px;height:27px;font:400 27px/27px 'Liberation Sans', sans-serif;color:#10736f;white-space:nowrap;-webkit-text-stroke:0.75px #10736f;left:2209.1px;transform:scaleX(0.9357);transform-origin:0 0;">Save</div>
<div style="position:absolute;top:62.9px;height:27px;font:400 27px/27px 'Liberation Sans', sans-serif;color:#10736f;white-space:nowrap;-webkit-text-stroke:0.75px #10736f;left:2318.4px;transform:scaleX(0.9839);transform-origin:0 0;">Open</div>
<div style="position:absolute;top:62.9px;height:27px;font:400 27px/27px 'Liberation Sans', sans-serif;color:#10736f;white-space:nowrap;-webkit-text-stroke:0.75px #10736f;left:2435.0px;transform:scaleX(0.9710);transform-origin:0 0;">Share</div>
<div style="position:absolute;top:62.9px;height:27px;font:400 27px/27px 'Liberation Sans', sans-serif;color:#10736f;white-space:nowrap;-webkit-text-stroke:0.75px #10736f;left:2555.5px;transform:scaleX(1.0425);transform-origin:0 0;">Reporting</div>
<div style="position:absolute;top:62.9px;height:27px;font:400 27px/27px 'Liberation Sans', sans-serif;color:#10736f;white-space:nowrap;-webkit-text-stroke:0.75px #10736f;left:2727.5px;transform:scaleX(1.0146);transform-origin:0 0;">Inspect</div>
<div style="position:absolute;top:65.0px;height:25px;font:400 25px/25px 'Liberation Sans', sans-serif;color:#1a1c21;white-space:nowrap;left:2894.1px;transform:scaleX(0.9000);transform-origin:0 0;">a</div>
<div style="position:absolute;top:289.0px;height:22px;font:400 22px/22px 'Liberation Sans', sans-serif;color:#1a1c21;white-space:nowrap;left:31.9px;transform:scaleX(0.8583);transform-origin:0 0;">3</div>
<div style="position:absolute;top:172.5px;height:27px;font:400 27px/27px 'Liberation Sans', sans-serif;color:#283645;white-space:nowrap;left:239.6px;transform:scaleX(0.9500);transform-origin:0 0;">spark</div>
<div style="position:absolute;top:169.3px;height:27px;font:700 27px/27px 'Liberation Sans', sans-serif;color:#10736f;white-space:nowrap;left:1731.1px;transform:scaleX(0.8649);transform-origin:0 0;">DQL</div>
<div style="position:absolute;top:170.0px;height:27px;font:400 27px/27px 'Liberation Sans', sans-serif;color:#283645;white-space:nowrap;left:1940.5px;transform:scaleX(0.9601);transform-origin:0 0;">Last 18 minutes</div>
<div style="position:absolute;top:169.5px;height:27px;font:400 27px/27px 'Liberation Sans', sans-serif;color:#10736f;white-space:nowrap;left:2605.8px;transform:scaleX(0.9571);transform-origin:0 0;">Show dates</div>
<div style="position:absolute;top:168.0px;height:30px;font:400 30px/30px 'Liberation Sans', sans-serif;color:#ffffff;white-space:nowrap;-webkit-text-stroke:0.75px #ffffff;left:2864.6px;transform:scaleX(0.9925);transform-origin:0 0;">Refresh</div>
<div style="position:absolute;top:248.8px;height:27px;font:400 27px/27px 'Liberation Sans', sans-serif;color:#10736f;white-space:nowrap;-webkit-text-stroke:0.75px #10736f;left:204.5px;transform:scaleX(1.0114);transform-origin:0 0;">+ Add filter</div>
<div style="position:absolute;top:379.8px;height:28px;font:700 28px/28px 'Liberation Sans', sans-serif;color:#283645;white-space:nowrap;left:1518.2px;transform:scaleX(1.0787);transform-origin:0 0;">66</div>
<div style="position:absolute;top:379.8px;height:28px;font:400 28px/28px 'Liberation Sans', sans-serif;color:#283645;white-space:nowrap;left:1558.9px;transform:scaleX(1.1258);transform-origin:0 0;">hits</div>
<div style="position:absolute;top:435.5px;height:27px;font:400 27px/27px 'Liberation Sans', sans-serif;color:#283645;white-space:nowrap;left:1088.8px;transform:scaleX(0.9110);transform-origin:0 0;">Mar 20, 2024 @ 14:00:51.418 - Mar 20, 2024 @ 14:18:51.418 per</div>
<div style="position:absolute;top:435.2px;height:27px;font:400 27px/27px 'Liberation Sans', sans-serif;color:#283645;white-space:nowrap;left:1839.9px;transform:scaleX(0.9738);transform-origin:0 0;">Auto</div>
<div style="position:absolute;top:754.8px;height:20px;font:400 20px/20px 'Liberation Sans', sans-serif;color:#69707d;white-space:nowrap;right:2795px;">0</div>
<div style="position:absolute;top:710.2px;height:20px;font:400 20px/20px 'Liberation Sans', sans-serif;color:#69707d;white-space:nowrap;right:2795px;">10</div>
<div style="position:absolute;top:665.6px;height:20px;font:400 20px/20px 'Liberation Sans', sans-serif;color:#69707d;white-space:nowrap;right:2795px;">20</div>
<div style="position:absolute;top:621.1px;height:20px;font:400 20px/20px 'Liberation Sans', sans-serif;color:#69707d;white-space:nowrap;right:2795px;">30</div>
<div style="position:absolute;top:576.5px;height:20px;font:400 20px/20px 'Liberation Sans', sans-serif;color:#69707d;white-space:nowrap;right:2795px;">40</div>
<div style="position:absolute;top:531.9px;height:20px;font:400 20px/20px 'Liberation Sans', sans-serif;color:#69707d;white-space:nowrap;right:2795px;">50</div>
<div style="position:absolute;top:784.2px;height:20px;font:400 20px/20px 'Liberation Sans', sans-serif;color:#69707d;white-space:nowrap;left:292.9px;transform:translateX(-50%);">14:01:00</div>
<div style="position:absolute;top:784.2px;height:20px;font:400 20px/20px 'Liberation Sans', sans-serif;color:#69707d;white-space:nowrap;left:440.1px;transform:translateX(-50%);">14:02:00</div>
<div style="position:absolute;top:784.2px;height:20px;font:400 20px/20px 'Liberation Sans', sans-serif;color:#69707d;white-space:nowrap;left:587.3px;transform:translateX(-50%);">14:03:00</div>
<div style="position:absolute;top:784.2px;height:20px;font:400 20px/20px 'Liberation Sans', sans-serif;color:#69707d;white-space:nowrap;left:734.5px;transform:translateX(-50%);">14:04:00</div>
<div style="position:absolute;top:784.2px;height:20px;font:400 20px/20px 'Liberation Sans', sans-serif;color:#69707d;white-space:nowrap;left:881.7px;transform:translateX(-50%);">14:05:00</div>
<div style="position:absolute;top:784.2px;height:20px;font:400 20px/20px 'Liberation Sans', sans-serif;color:#69707d;white-space:nowrap;left:1028.9px;transform:translateX(-50%);">14:06:00</div>
<div style="position:absolute;top:784.2px;height:20px;font:400 20px/20px 'Liberation Sans', sans-serif;color:#69707d;white-space:nowrap;left:1176.1px;transform:translateX(-50%);">14:07:00</div>
<div style="position:absolute;top:784.2px;height:20px;font:400 20px/20px 'Liberation Sans', sans-serif;color:#69707d;white-space:nowrap;left:1323.3px;transform:translateX(-50%);">14:08:00</div>
<div style="position:absolute;top:784.2px;height:20px;font:400 20px/20px 'Liberation Sans', sans-serif;color:#69707d;white-space:nowrap;left:1470.5px;transform:translateX(-50%);">14:09:00</div>
<div style="position:absolute;top:784.2px;height:20px;font:400 20px/20px 'Liberation Sans', sans-serif;color:#69707d;white-space:nowrap;left:1617.7px;transform:translateX(-50%);">14:10:00</div>
<div style="position:absolute;top:784.2px;height:20px;font:400 20px/20px 'Liberation Sans', sans-serif;color:#69707d;white-space:nowrap;left:1764.9px;transform:translateX(-50%);">14:11:00</div>
<div style="position:absolute;top:784.2px;height:20px;font:400 20px/20px 'Liberation Sans', sans-serif;color:#69707d;white-space:nowrap;left:1912.1px;transform:translateX(-50%);">14:12:00</div>
<div style="position:absolute;top:784.2px;height:20px;font:400 20px/20px 'Liberation Sans', sans-serif;color:#69707d;white-space:nowrap;left:2059.3px;transform:translateX(-50%);">14:13:00</div>
<div style="position:absolute;top:784.2px;height:20px;font:400 20px/20px 'Liberation Sans', sans-serif;color:#69707d;white-space:nowrap;left:2206.5px;transform:translateX(-50%);">14:14:00</div>
<div style="position:absolute;top:784.2px;height:20px;font:400 20px/20px 'Liberation Sans', sans-serif;color:#69707d;white-space:nowrap;left:2353.7px;transform:translateX(-50%);">14:15:00</div>
<div style="position:absolute;top:784.2px;height:20px;font:400 20px/20px 'Liberation Sans', sans-serif;color:#69707d;white-space:nowrap;left:2500.9px;transform:translateX(-50%);">14:16:00</div>
<div style="position:absolute;top:784.2px;height:20px;font:400 20px/20px 'Liberation Sans', sans-serif;color:#69707d;white-space:nowrap;left:2648.1px;transform:translateX(-50%);">14:17:00</div>
<div style="position:absolute;top:784.2px;height:20px;font:400 20px/20px 'Liberation Sans', sans-serif;color:#69707d;white-space:nowrap;left:2795.3px;transform:translateX(-50%);">14:18:00</div>
<div style="position:absolute;top:840.0px;height:24px;font:700 24px/24px 'Liberation Sans', sans-serif;color:#343741;white-space:nowrap;left:1445.5px;">timestamp per 30 seconds</div>
<div style="position:absolute;top:985.3px;height:27px;font:400 27px/27px 'Liberation Sans', sans-serif;color:#283645;white-space:nowrap;-webkit-text-stroke:0.75px #283645;left:204.6px;transform:scaleX(0.9939);transform-origin:0 0;">Columns</div>
<div style="position:absolute;top:985.3px;height:27px;font:400 27px/27px 'Liberation Sans', sans-serif;color:#283645;white-space:nowrap;-webkit-text-stroke:0.75px #283645;left:390.7px;transform:scaleX(1.0173);transform-origin:0 0;">Sort fields</div>
<div style="position:absolute;top:1052.3px;height:27px;font:700 27px/27px 'Liberation Sans', sans-serif;color:#283645;white-space:nowrap;left:224.0px;transform:scaleX(0.9779);transform-origin:0 0;">Time (timestamp)</div>
<div style="position:absolute;top:1052.3px;height:27px;font:700 27px/27px 'Liberation Sans', sans-serif;color:#283645;white-space:nowrap;left:624.0px;transform:scaleX(0.9667);transform-origin:0 0;">level</div>
<div style="position:absolute;top:1052.3px;height:27px;font:700 27px/27px 'Liberation Sans', sans-serif;color:#283645;white-space:nowrap;left:803.3px;transform:scaleX(0.9676);transform-origin:0 0;">container</div>
<div style="position:absolute;top:1052.3px;height:27px;font:700 27px/27px 'Liberation Sans', sans-serif;color:#283645;white-space:nowrap;left:995.1px;transform:scaleX(0.9216);transform-origin:0 0;">message</div>
<div style="position:absolute;top:1052.3px;height:27px;font:700 27px/27px 'Liberation Sans', sans-serif;color:#283645;white-space:nowrap;left:1599.9px;transform:scaleX(0.9845);transform-origin:0 0;">file</div>
<div style="position:absolute;top:1052.3px;height:27px;font:700 27px/27px 'Liberation Sans', sans-serif;color:#283645;white-space:nowrap;left:1993.0px;transform:scaleX(0.9425);transform-origin:0 0;">logger</div>
<div style="position:absolute;top:1052.3px;height:27px;font:700 27px/27px 'Liberation Sans', sans-serif;color:#283645;white-space:nowrap;left:2387.2px;transform:scaleX(0.9724);transform-origin:0 0;">pod</div>
<div style="position:absolute;top:1119.6px;height:27px;font:400 27px/27px 'Liberation Sans', sans-serif;color:#283645;white-space:nowrap;left:224.0px;transform:scaleX(0.9032);transform-origin:0 0;">Mar 20, 2024 @ 14:09:57.716</div>
<div style="position:absolute;top:1119.6px;height:27px;font:400 27px/27px 'Liberation Sans', sans-serif;color:#283645;white-space:nowrap;left:624.0px;transform:scaleX(0.8839);transform-origin:0 0;">INFO</div>
<div style="position:absolute;top:1119.6px;height:27px;font:400 27px/27px 'Liberation Sans', sans-serif;color:#283645;white-space:nowrap;left:803.3px;transform:scaleX(1.0325);transform-origin:0 0;">airflow</div>
<div style="position:absolute;top:1119.6px;height:27px;font:400 27px/27px 'Liberation Sans', sans-serif;color:#283645;white-space:nowrap;left:995.1px;transform:scaleX(0.9480);transform-origin:0 0;">[<svg width="13" height="19" viewBox="0 0 14 19" preserveAspectRatio="none" style="margin:0 3px;vertical-align:0px"><rect x="0.7" y="0.7" width="12.6" height="17.6" fill="none" stroke="#283645" stroke-width="1.5"/><path d="M1 1 L13 18 M13 1 L1 18" stroke="#283645" stroke-width="1.1"/></svg>[34m2024-03-20T13:09:52.408+0000<svg width="13" height="19" viewBox="0 0 14 19" preserveAspectRatio="none" style="margin:0 3px;vertical-align:0px"><rect x="0.7" y="0.7" width="12.6" height="17.6" fill="none" stroke="#283645" stroke-width="1.5"/><path d="M1 1 L13 18 M13 1 L1 18" stroke="#283645" stroke-width="1.1"/></svg>[0m] {<svg width="13" height="19" viewBox="0 0 14 19" preserveAspectRatio="none" style="margin:0 3px;vertical-align:0px"><rect x="0.7" y="0.7" width="12.6" height="17.6" fill="none" stroke="#283645" stroke-width="1.5"/><path d="M1 1 L13 18 M13 1 L1 18" stroke="#283645" stroke-width="1.1"/></svg>…</div>
<div style="position:absolute;top:1119.6px;height:27px;font:400 27px/27px 'Liberation Sans', sans-serif;color:#283645;white-space:nowrap;left:1599.9px;transform:scaleX(1.0036);transform-origin:0 0;">container.stdout.log</div>
<div style="position:absolute;top:1119.6px;height:27px;font:400 27px/27px 'Liberation Sans', sans-serif;color:#283645;white-space:nowrap;left:1993.0px;transform:scaleX(0.8702);transform-origin:0 0;">ROOT</div>
<div style="position:absolute;top:1119.6px;height:27px;font:400 27px/27px 'Liberation Sans', sans-serif;color:#283645;white-space:nowrap;left:2387.2px;transform:scaleX(0.9950);transform-origin:0 0;">airflow-scheduler-default-0</div>
<div style="position:absolute;top:1185.6px;height:27px;font:400 27px/27px 'Liberation Sans', sans-serif;color:#283645;white-space:nowrap;left:224.0px;transform:scaleX(0.9032);transform-origin:0 0;">Mar 20, 2024 @ 14:09:52.408</div>
<div style="position:absolute;top:1185.6px;height:27px;font:400 27px/27px 'Liberation Sans', sans-serif;color:#283645;white-space:nowrap;left:624.0px;transform:scaleX(0.8839);transform-origin:0 0;">INFO</div>
<div style="position:absolute;top:1185.6px;height:27px;font:400 27px/27px 'Liberation Sans', sans-serif;color:#283645;white-space:nowrap;left:803.3px;transform:scaleX(1.0325);transform-origin:0 0;">airflow</div>
<div style="position:absolute;top:1185.6px;height:27px;font:400 27px/27px 'Liberation Sans', sans-serif;color:#283645;white-space:nowrap;left:995.1px;transform:scaleX(0.9756);transform-origin:0 0;">Event: sparkapp-dag-<span style="background:#ffff2e;color:#121212;padding:3px 0 4px">spark</span>-pi-monitor-80y3uw…</div>
<div style="position:absolute;top:1185.6px;height:27px;font:400 27px/27px 'Liberation Sans', sans-serif;color:#283645;white-space:nowrap;left:1599.9px;transform:scaleX(1.0149);transform-origin:0 0;">airflow.py.json</div>
<div style="position:absolute;top:1185.6px;height:27px;font:400 27px/27px 'Liberation Sans', sans-serif;color:#283645;white-space:nowrap;left:1993.0px;">airflow.providers.cncf.kuber…</div>
<div style="position:absolute;top:1185.6px;height:27px;font:400 27px/27px 'Liberation Sans', sans-serif;color:#283645;white-space:nowrap;left:2387.2px;transform:scaleX(0.9950);transform-origin:0 0;">airflow-scheduler-default-0</div>
<div style="position:absolute;top:1251.6px;height:27px;font:400 27px/27px 'Liberation Sans', sans-serif;color:#283645;white-space:nowrap;left:224.0px;transform:scaleX(0.9032);transform-origin:0 0;">Mar 20, 2024 @ 14:09:05.219</div>
<div style="position:absolute;top:1251.6px;height:27px;font:400 27px/27px 'Liberation Sans', sans-serif;color:#283645;white-space:nowrap;left:624.0px;transform:scaleX(0.8839);transform-origin:0 0;">INFO</div>
<div style="position:absolute;top:1251.6px;height:27px;font:400 27px/27px 'Liberation Sans', sans-serif;color:#283645;white-space:nowrap;left:803.3px;transform:scaleX(0.9211);transform-origin:0 0;">base</div>
<div style="position:absolute;top:1251.6px;height:27px;font:400 27px/27px 'Liberation Sans', sans-serif;color:#283645;white-space:nowrap;left:995.1px;transform:scaleX(0.9544);transform-origin:0 0;">Running &lt;TaskInstance: sparkapp_dag.spark_p…</div>
<div style="position:absolute;top:1251.6px;height:27px;font:400 27px/27px 'Liberation Sans', sans-serif;color:#283645;white-space:nowrap;left:1599.9px;transform:scaleX(1.0149);transform-origin:0 0;">airflow.py.json</div>
<div style="position:absolute;top:1251.6px;height:27px;font:400 27px/27px 'Liberation Sans', sans-serif;color:#283645;white-space:nowrap;left:1993.0px;transform:scaleX(0.9881);transform-origin:0 0;">airflow.cli.commands.task_c…</div>
<div style="position:absolute;top:1251.6px;height:27px;font:400 27px/27px 'Liberation Sans', sans-serif;color:#283645;white-space:nowrap;left:2387.2px;transform:scaleX(0.9779);transform-origin:0 0;">sparkapp-dag-<span style="background:#ffff2e;color:#121212;padding:3px 0 4px">spark</span>-pi-monitor-80y3uw09</div>
<div style="position:absolute;top:1317.6px;height:27px;font:400 27px/27px 'Liberation Sans', sans-serif;color:#283645;white-space:nowrap;left:224.0px;transform:scaleX(0.9082);transform-origin:0 0;">Mar 20, 2024 @ 14:09:04.118</div>
<div style="position:absolute;top:1317.6px;height:27px;font:400 27px/27px 'Liberation Sans', sans-serif;color:#283645;white-space:nowrap;left:624.0px;transform:scaleX(0.8839);transform-origin:0 0;">INFO</div>
<div style="position:absolute;top:1317.6px;height:27px;font:400 27px/27px 'Liberation Sans', sans-serif;color:#283645;white-space:nowrap;left:803.3px;transform:scaleX(0.9211);transform-origin:0 0;">base</div>
<div style="position:absolute;top:1317.6px;height:27px;font:400 27px/27px 'Liberation Sans', sans-serif;color:#283645;white-space:nowrap;left:995.1px;transform:scaleX(0.9802);transform-origin:0 0;">Filling up the DagBag from /stackable/app/git/c…</div>
<div style="position:absolute;top:1317.6px;height:27px;font:400 27px/27px 'Liberation Sans', sans-serif;color:#283645;white-space:nowrap;left:1599.9px;transform:scaleX(1.0149);transform-origin:0 0;">airflow.py.json</div>
<div style="position:absolute;top:1317.6px;height:27px;font:400 27px/27px 'Liberation Sans', sans-serif;color:#283645;white-space:nowrap;left:1993.0px;transform:scaleX(0.9600);transform-origin:0 0;">airflow.models.dagbag.DagBag</div>
<div style="position:absolute;top:1317.6px;height:27px;font:400 27px/27px 'Liberation Sans', sans-serif;color:#283645;white-space:nowrap;left:2387.2px;transform:scaleX(0.9779);transform-origin:0 0;">sparkapp-dag-<span style="background:#ffff2e;color:#121212;padding:3px 0 4px">spark</span>-pi-monitor-80y3uw09</div>
<div style="position:absolute;top:1383.6px;height:27px;font:400 27px/27px 'Liberation Sans', sans-serif;color:#283645;white-space:nowrap;left:224.0px;transform:scaleX(0.9032);transform-origin:0 0;">Mar 20, 2024 @ 14:09:01.125</div>
<div style="position:absolute;top:1383.6px;height:27px;font:400 27px/27px 'Liberation Sans', sans-serif;color:#283645;white-space:nowrap;left:624.0px;transform:scaleX(0.8839);transform-origin:0 0;">INFO</div>
<div style="position:absolute;top:1383.6px;height:27px;font:400 27px/27px 'Liberation Sans', sans-serif;color:#283645;white-space:nowrap;left:803.3px;">vector</div>
<div style="position:absolute;top:1383.6px;height:27px;font:400 27px/27px 'Liberation Sans', sans-serif;color:#283645;white-space:nowrap;left:995.1px;transform:scaleX(0.9678);transform-origin:0 0;">Found new file to watch.</div>
<div style="position:absolute;top:1383.6px;height:27px;font:400 27px/27px 'Liberation Sans', sans-serif;color:#283645;white-space:nowrap;left:1599.9px;transform:scaleX(0.9685);transform-origin:0 0;">-</div>
<div style="position:absolute;top:1383.6px;height:27px;font:400 27px/27px 'Liberation Sans', sans-serif;color:#283645;white-space:nowrap;left:1993.0px;transform:scaleX(0.9833);transform-origin:0 0;">vector::internal_events::file::…</div>
<div style="position:absolute;top:1383.6px;height:27px;font:400 27px/27px 'Liberation Sans', sans-serif;color:#283645;white-space:nowrap;left:2387.2px;transform:scaleX(0.9779);transform-origin:0 0;">sparkapp-dag-<span style="background:#ffff2e;color:#121212;padding:3px 0 4px">spark</span>-pi-monitor-80y3uw09</div>
<div style="position:absolute;top:1449.6px;height:27px;font:400 27px/27px 'Liberation Sans', sans-serif;color:#283645;white-space:nowrap;left:224.0px;transform:scaleX(0.9032);transform-origin:0 0;">Mar 20, 2024 @ 14:09:00.825</div>
<div style="position:absolute;top:1449.6px;height:27px;font:400 27px/27px 'Liberation Sans', sans-serif;color:#283645;white-space:nowrap;left:624.0px;transform:scaleX(0.8839);transform-origin:0 0;">INFO</div>
<div style="position:absolute;top:1449.6px;height:27px;font:400 27px/27px 'Liberation Sans', sans-serif;color:#283645;white-space:nowrap;left:803.3px;transform:scaleX(0.9211);transform-origin:0 0;">base</div>
<div style="position:absolute;top:1449.6px;height:27px;font:400 27px/27px 'Liberation Sans', sans-serif;color:#283645;white-space:nowrap;left:995.1px;transform:scaleX(0.9514);transform-origin:0 0;">Connection successful.</div>
<div style="position:absolute;top:1449.6px;height:27px;font:400 27px/27px 'Liberation Sans', sans-serif;color:#283645;white-space:nowrap;left:1599.9px;transform:scaleX(1.0149);transform-origin:0 0;">airflow.py.json</div>
<div style="position:absolute;top:1449.6px;height:27px;font:400 27px/27px 'Liberation Sans', sans-serif;color:#283645;white-space:nowrap;left:1993.0px;transform:scaleX(1.0239);transform-origin:0 0;">airflow.utils.db</div>
<div style="position:absolute;top:1449.6px;height:27px;font:400 27px/27px 'Liberation Sans', sans-serif;color:#283645;white-space:nowrap;left:2387.2px;transform:scaleX(0.9779);transform-origin:0 0;">sparkapp-dag-<span style="background:#ffff2e;color:#121212;padding:3px 0 4px">spark</span>-pi-monitor-80y3uw09</div>
<div style="position:absolute;top:1515.6px;height:27px;font:400 27px/27px 'Liberation Sans', sans-serif;color:#283645;white-space:nowrap;left:224.0px;transform:scaleX(0.9032);transform-origin:0 0;">Mar 20, 2024 @ 14:09:00.315</div>
<div style="position:absolute;top:1515.6px;height:27px;font:400 27px/27px 'Liberation Sans', sans-serif;color:#283645;white-space:nowrap;left:624.0px;transform:scaleX(0.8839);transform-origin:0 0;">INFO</div>
<div style="position:absolute;top:1515.6px;height:27px;font:400 27px/27px 'Liberation Sans', sans-serif;color:#283645;white-space:nowrap;left:803.3px;transform:scaleX(1.0325);transform-origin:0 0;">airflow</div>
<div style="position:absolute;top:1515.6px;height:27px;font:400 27px/27px 'Liberation Sans', sans-serif;color:#283645;white-space:nowrap;left:995.1px;transform:scaleX(0.9480);transform-origin:0 0;">[<svg width="13" height="19" viewBox="0 0 14 19" preserveAspectRatio="none" style="margin:0 3px;vertical-align:0px"><rect x="0.7" y="0.7" width="12.6" height="17.6" fill="none" stroke="#283645" stroke-width="1.5"/><path d="M1 1 L13 18 M13 1 L1 18" stroke="#283645" stroke-width="1.1"/></svg>[34m2024-03-20T13:08:59.235+0000<svg width="13" height="19" viewBox="0 0 14 19" preserveAspectRatio="none" style="margin:0 3px;vertical-align:0px"><rect x="0.7" y="0.7" width="12.6" height="17.6" fill="none" stroke="#283645" stroke-width="1.5"/><path d="M1 1 L13 18 M13 1 L1 18" stroke="#283645" stroke-width="1.1"/></svg>[0m] {<svg width="13" height="19" viewBox="0 0 14 19" preserveAspectRatio="none" style="margin:0 3px;vertical-align:0px"><rect x="0.7" y="0.7" width="12.6" height="17.6" fill="none" stroke="#283645" stroke-width="1.5"/><path d="M1 1 L13 18 M13 1 L1 18" stroke="#283645" stroke-width="1.1"/></svg>…</div>
<div style="position:absolute;top:1515.6px;height:27px;font:400 27px/27px 'Liberation Sans', sans-serif;color:#283645;white-space:nowrap;left:1599.9px;transform:scaleX(1.0036);transform-origin:0 0;">container.stdout.log</div>
<div style="position:absolute;top:1515.6px;height:27px;font:400 27px/27px 'Liberation Sans', sans-serif;color:#283645;white-space:nowrap;left:1993.0px;transform:scaleX(0.8702);transform-origin:0 0;">ROOT</div>
<div style="position:absolute;top:1515.6px;height:27px;font:400 27px/27px 'Liberation Sans', sans-serif;color:#283645;white-space:nowrap;left:2387.2px;transform:scaleX(0.9950);transform-origin:0 0;">airflow-scheduler-default-0</div>
<div style="position:absolute;top:1581.6px;height:27px;font:400 27px/27px 'Liberation Sans', sans-serif;color:#283645;white-space:nowrap;left:224.0px;transform:scaleX(0.9032);transform-origin:0 0;">Mar 20, 2024 @ 14:09:00.101</div>
<div style="position:absolute;top:1581.6px;height:27px;font:400 27px/27px 'Liberation Sans', sans-serif;color:#283645;white-space:nowrap;left:624.0px;transform:scaleX(0.8845);transform-origin:0 0;">WARN</div>
<div style="position:absolute;top:1581.6px;height:27px;font:400 27px/27px 'Liberation Sans', sans-serif;color:#283645;white-space:nowrap;left:803.3px;">vector</div>
<div style="position:absolute;top:1581.6px;height:27px;font:400 27px/27px 'Liberation Sans', sans-serif;color:#283645;white-space:nowrap;left:995.1px;transform:scaleX(0.9900);transform-origin:0 0;">Currently ignoring file too small to fingerprint.</div>
<div style="position:absolute;top:1581.6px;height:27px;font:400 27px/27px 'Liberation Sans', sans-serif;color:#283645;white-space:nowrap;left:1599.9px;transform:scaleX(0.9685);transform-origin:0 0;">-</div>
<div style="position:absolute;top:1581.6px;height:27px;font:400 27px/27px 'Liberation Sans', sans-serif;color:#283645;white-space:nowrap;left:1993.0px;transform:scaleX(0.9833);transform-origin:0 0;">vector::internal_events::file::…</div>
<div style="position:absolute;top:1581.6px;height:27px;font:400 27px/27px 'Liberation Sans', sans-serif;color:#283645;white-space:nowrap;left:2387.2px;transform:scaleX(0.9779);transform-origin:0 0;">sparkapp-dag-<span style="background:#ffff2e;color:#121212;padding:3px 0 4px">spark</span>-pi-monitor-80y3uw09</div>
<div style="position:absolute;top:1647.6px;height:27px;font:400 27px/27px 'Liberation Sans', sans-serif;color:#283645;white-space:nowrap;left:224.0px;transform:scaleX(0.9032);transform-origin:0 0;">Mar 20, 2024 @ 14:08:59.235</div>
<div style="position:absolute;top:1647.6px;height:27px;font:400 27px/27px 'Liberation Sans', sans-serif;color:#283645;white-space:nowrap;left:624.0px;transform:scaleX(0.8839);transform-origin:0 0;">INFO</div>
<div style="position:absolute;top:1647.6px;height:27px;font:400 27px/27px 'Liberation Sans', sans-serif;color:#283645;white-space:nowrap;left:803.3px;transform:scaleX(1.0325);transform-origin:0 0;">airflow</div>
<div style="position:absolute;top:1647.6px;height:27px;font:400 27px/27px 'Liberation Sans', sans-serif;color:#283645;white-space:nowrap;left:995.1px;transform:scaleX(0.9756);transform-origin:0 0;">Event: sparkapp-dag-<span style="background:#ffff2e;color:#121212;padding:3px 0 4px">spark</span>-pi-monitor-80y3uw…</div>
<div style="position:absolute;top:1647.6px;height:27px;font:400 27px/27px 'Liberation Sans', sans-serif;color:#283645;white-space:nowrap;left:1599.9px;transform:scaleX(1.0149);transform-origin:0 0;">airflow.py.json</div>
<div style="position:absolute;top:1647.6px;height:27px;font:400 27px/27px 'Liberation Sans', sans-serif;color:#283645;white-space:nowrap;left:1993.0px;">airflow.providers.cncf.kuber…</div>
<div style="position:absolute;top:1647.6px;height:27px;font:400 27px/27px 'Liberation Sans', sans-serif;color:#283645;white-space:nowrap;left:2387.2px;transform:scaleX(0.9950);transform-origin:0 0;">airflow-scheduler-default-0</div>
<div style="position:absolute;top:1713.6px;height:27px;font:400 27px/27px 'Liberation Sans', sans-serif;color:#283645;white-space:nowrap;left:224.0px;transform:scaleX(0.9032);transform-origin:0 0;">Mar 20, 2024 @ 14:08:59.067</div>
<div style="position:absolute;top:1713.6px;height:27px;font:400 27px/27px 'Liberation Sans', sans-serif;color:#283645;white-space:nowrap;left:624.0px;transform:scaleX(0.8839);transform-origin:0 0;">INFO</div>
<div style="position:absolute;top:1713.6px;height:27px;font:400 27px/27px 'Liberation Sans', sans-serif;color:#283645;white-space:nowrap;left:803.3px;">vector</div>
<div style="position:absolute;top:1713.6px;height:27px;font:400 27px/27px 'Liberation Sans', sans-serif;color:#283645;white-space:nowrap;left:995.1px;transform:scaleX(0.9447);transform-origin:0 0;">Healthcheck passed.</div>
<div style="position:absolute;top:1713.6px;height:27px;font:400 27px/27px 'Liberation Sans', sans-serif;color:#283645;white-space:nowrap;left:1599.9px;transform:scaleX(0.9685);transform-origin:0 0;">-</div>
<div style="position:absolute;top:1713.6px;height:27px;font:400 27px/27px 'Liberation Sans', sans-serif;color:#283645;white-space:nowrap;left:1993.0px;transform:scaleX(0.9961);transform-origin:0 0;">vector::topology::builder</div>
<div style="position:absolute;top:1713.6px;height:27px;font:400 27px/27px 'Liberation Sans', sans-serif;color:#283645;white-space:nowrap;left:2387.2px;transform:scaleX(0.9779);transform-origin:0 0;">sparkapp-dag-<span style="background:#ffff2e;color:#121212;padding:3px 0 4px">spark</span>-pi-monitor-80y3uw09</div>
<div style="position:absolute;top:1779.6px;height:27px;font:400 27px/27px 'Liberation Sans', sans-serif;color:#283645;white-space:nowrap;left:224.0px;transform:scaleX(0.9032);transform-origin:0 0;">Mar 20, 2024 @ 14:08:59.066</div>
<div style="position:absolute;top:1779.6px;height:27px;font:400 27px/27px 'Liberation Sans', sans-serif;color:#283645;white-space:nowrap;left:624.0px;transform:scaleX(0.8839);transform-origin:0 0;">INFO</div>
<div style="position:absolute;top:1779.6px;height:27px;font:400 27px/27px 'Liberation Sans', sans-serif;color:#283645;white-space:nowrap;left:803.3px;">vector</div>
<div style="position:absolute;top:1779.6px;height:27px;font:400 27px/27px 'Liberation Sans', sans-serif;color:#283645;white-space:nowrap;left:995.1px;transform:scaleX(0.9730);transform-origin:0 0;">Attempting to read legacy checkpoint files.</div>
<div style="position:absolute;top:1779.6px;height:27px;font:400 27px/27px 'Liberation Sans', sans-serif;color:#283645;white-space:nowrap;left:1599.9px;transform:scaleX(0.9685);transform-origin:0 0;">-</div>
<div style="position:absolute;top:1779.6px;height:27px;font:400 27px/27px 'Liberation Sans', sans-serif;color:#283645;white-space:nowrap;left:1993.0px;transform:scaleX(0.9808);transform-origin:0 0;">file_source::checkpointer</div>
<div style="position:absolute;top:1779.6px;height:27px;font:400 27px/27px 'Liberation Sans', sans-serif;color:#283645;white-space:nowrap;left:2387.2px;transform:scaleX(0.9779);transform-origin:0 0;">sparkapp-dag-<span style="background:#ffff2e;color:#121212;padding:3px 0 4px">spark</span>-pi-monitor-80y3uw09</div>
<div style="position:absolute;top:1845.6px;height:27px;font:400 27px/27px 'Liberation Sans', sans-serif;color:#283645;white-space:nowrap;left:224.0px;transform:scaleX(0.9032);transform-origin:0 0;">Mar 20, 2024 @ 14:08:59.066</div>
<div style="position:absolute;top:1845.6px;height:27px;font:400 27px/27px 'Liberation Sans', sans-serif;color:#283645;white-space:nowrap;left:624.0px;transform:scaleX(0.8839);transform-origin:0 0;">INFO</div>
<div style="position:absolute;top:1845.6px;height:27px;font:400 27px/27px 'Liberation Sans', sans-serif;color:#283645;white-space:nowrap;left:803.3px;">vector</div>
<div style="position:absolute;top:1845.6px;height:27px;font:400 27px/27px 'Liberation Sans', sans-serif;color:#283645;white-space:nowrap;left:995.1px;transform:scaleX(0.9730);transform-origin:0 0;">Attempting to read legacy checkpoint files.</div>
<div style="position:absolute;top:1845.6px;height:27px;font:400 27px/27px 'Liberation Sans', sans-serif;color:#283645;white-space:nowrap;left:1599.9px;transform:scaleX(0.9685);transform-origin:0 0;">-</div>
<div style="position:absolute;top:1845.6px;height:27px;font:400 27px/27px 'Liberation Sans', sans-serif;color:#283645;white-space:nowrap;left:1993.0px;transform:scaleX(0.9808);transform-origin:0 0;">file_source::checkpointer</div>
<div style="position:absolute;top:1845.6px;height:27px;font:400 27px/27px 'Liberation Sans', sans-serif;color:#283645;white-space:nowrap;left:2387.2px;transform:scaleX(0.9779);transform-origin:0 0;">sparkapp-dag-<span style="background:#ffff2e;color:#121212;padding:3px 0 4px">spark</span>-pi-monitor-80y3uw09</div>
<div style="position:absolute;top:1911.6px;height:27px;font:400 27px/27px 'Liberation Sans', sans-serif;color:#283645;white-space:nowrap;left:224.0px;transform:scaleX(0.9032);transform-origin:0 0;">Mar 20, 2024 @ 14:08:59.065</div>
<div style="position:absolute;top:1911.6px;height:27px;font:400 27px/27px 'Liberation Sans', sans-serif;color:#283645;white-space:nowrap;left:624.0px;transform:scaleX(0.8839);transform-origin:0 0;">INFO</div>
<div style="position:absolute;top:1911.6px;height:27px;font:400 27px/27px 'Liberation Sans', sans-serif;color:#283645;white-space:nowrap;left:803.3px;">vector</div>
<div style="position:absolute;top:1911.6px;height:27px;font:400 27px/27px 'Liberation Sans', sans-serif;color:#283645;white-space:nowrap;left:995.1px;transform:scaleX(0.9730);transform-origin:0 0;">Attempting to read legacy checkpoint files.</div>
<div style="position:absolute;top:1911.6px;height:27px;font:400 27px/27px 'Liberation Sans', sans-serif;color:#283645;white-space:nowrap;left:1599.9px;transform:scaleX(0.9685);transform-origin:0 0;">-</div>
<div style="position:absolute;top:1911.6px;height:27px;font:400 27px/27px 'Liberation Sans', sans-serif;color:#283645;white-space:nowrap;left:1993.0px;transform:scaleX(0.9808);transform-origin:0 0;">file_source::checkpointer</div>
<div style="position:absolute;top:1911.6px;height:27px;font:400 27px/27px 'Liberation Sans', sans-serif;color:#283645;white-space:nowrap;left:2387.2px;transform:scaleX(0.9779);transform-origin:0 0;">sparkapp-dag-<span style="background:#ffff2e;color:#121212;padding:3px 0 4px">spark</span>-pi-monitor-80y3uw09</div>
<div style="position:absolute;top:1977.6px;height:27px;font:400 27px/27px 'Liberation Sans', sans-serif;color:#283645;white-space:nowrap;left:224.0px;transform:scaleX(0.9032);transform-origin:0 0;">Mar 20, 2024 @ 14:08:59.064</div>
<div style="position:absolute;top:1977.6px;height:27px;font:400 27px/27px 'Liberation Sans', sans-serif;color:#283645;white-space:nowrap;left:624.0px;transform:scaleX(0.8839);transform-origin:0 0;">INFO</div>
<div style="position:absolute;top:1977.6px;height:27px;font:400 27px/27px 'Liberation Sans', sans-serif;color:#283645;white-space:nowrap;left:803.3px;">vector</div>
<div style="position:absolute;top:1977.6px;height:27px;font:400 27px/27px 'Liberation Sans', sans-serif;color:#283645;white-space:nowrap;left:995.1px;transform:scaleX(0.9753);transform-origin:0 0;">Starting file server.</div>
<div style="position:absolute;top:1977.6px;height:27px;font:400 27px/27px 'Liberation Sans', sans-serif;color:#283645;white-space:nowrap;left:1599.9px;transform:scaleX(0.9685);transform-origin:0 0;">-</div>
<div style="position:absolute;top:1977.6px;height:27px;font:400 27px/27px 'Liberation Sans', sans-serif;color:#283645;white-space:nowrap;left:1993.0px;transform:scaleX(0.9643);transform-origin:0 0;">vector::sources::file</div>
<div style="position:absolute;top:1977.6px;height:27px;font:400 27px/27px 'Liberation Sans', sans-serif;color:#283645;white-space:nowrap;left:2387.2px;transform:scaleX(0.9779);transform-origin:0 0;">sparkapp-dag-<span style="background:#ffff2e;color:#121212;padding:3px 0 4px">spark</span>-pi-monitor-80y3uw09</div>
<div style="position:absolute;top:2043.6px;height:27px;font:400 27px/27px 'Liberation Sans', sans-serif;color:#283645;white-space:nowrap;left:224.0px;transform:scaleX(0.9032);transform-origin:0 0;">Mar 20, 2024 @ 14:08:59.063</div>
<div style="position:absolute;top:2043.6px;height:27px;font:400 27px/27px 'Liberation Sans', sans-serif;color:#283645;white-space:nowrap;left:624.0px;transform:scaleX(0.8839);transform-origin:0 0;">INFO</div>
<div style="position:absolute;top:2043.6px;height:27px;font:400 27px/27px 'Liberation Sans', sans-serif;color:#283645;white-space:nowrap;left:803.3px;">vector</div>
<div style="position:absolute;top:2043.6px;height:27px;font:400 27px/27px 'Liberation Sans', sans-serif;color:#283645;white-space:nowrap;left:995.1px;transform:scaleX(0.9753);transform-origin:0 0;">Starting file server.</div>
<div style="position:absolute;top:2043.6px;height:27px;font:400 27px/27px 'Liberation Sans', sans-serif;color:#283645;white-space:nowrap;left:1599.9px;transform:scaleX(0.9685);transform-origin:0 0;">-</div>
<div style="position:absolute;top:2043.6px;height:27px;font:400 27px/27px 'Liberation Sans', sans-serif;color:#283645;white-space:nowrap;left:1993.0px;transform:scaleX(0.9643);transform-origin:0 0;">vector::sources::file</div>
<div style="position:absolute;top:2043.6px;height:27px;font:400 27px/27px 'Liberation Sans', sans-serif;color:#283645;white-space:nowrap;left:2387.2px;transform:scaleX(0.9779);transform-origin:0 0;">sparkapp-dag-<span style="background:#ffff2e;color:#121212;padding:3px 0 4px">spark</span>-pi-monitor-80y3uw09</div>
</div></body></html>
